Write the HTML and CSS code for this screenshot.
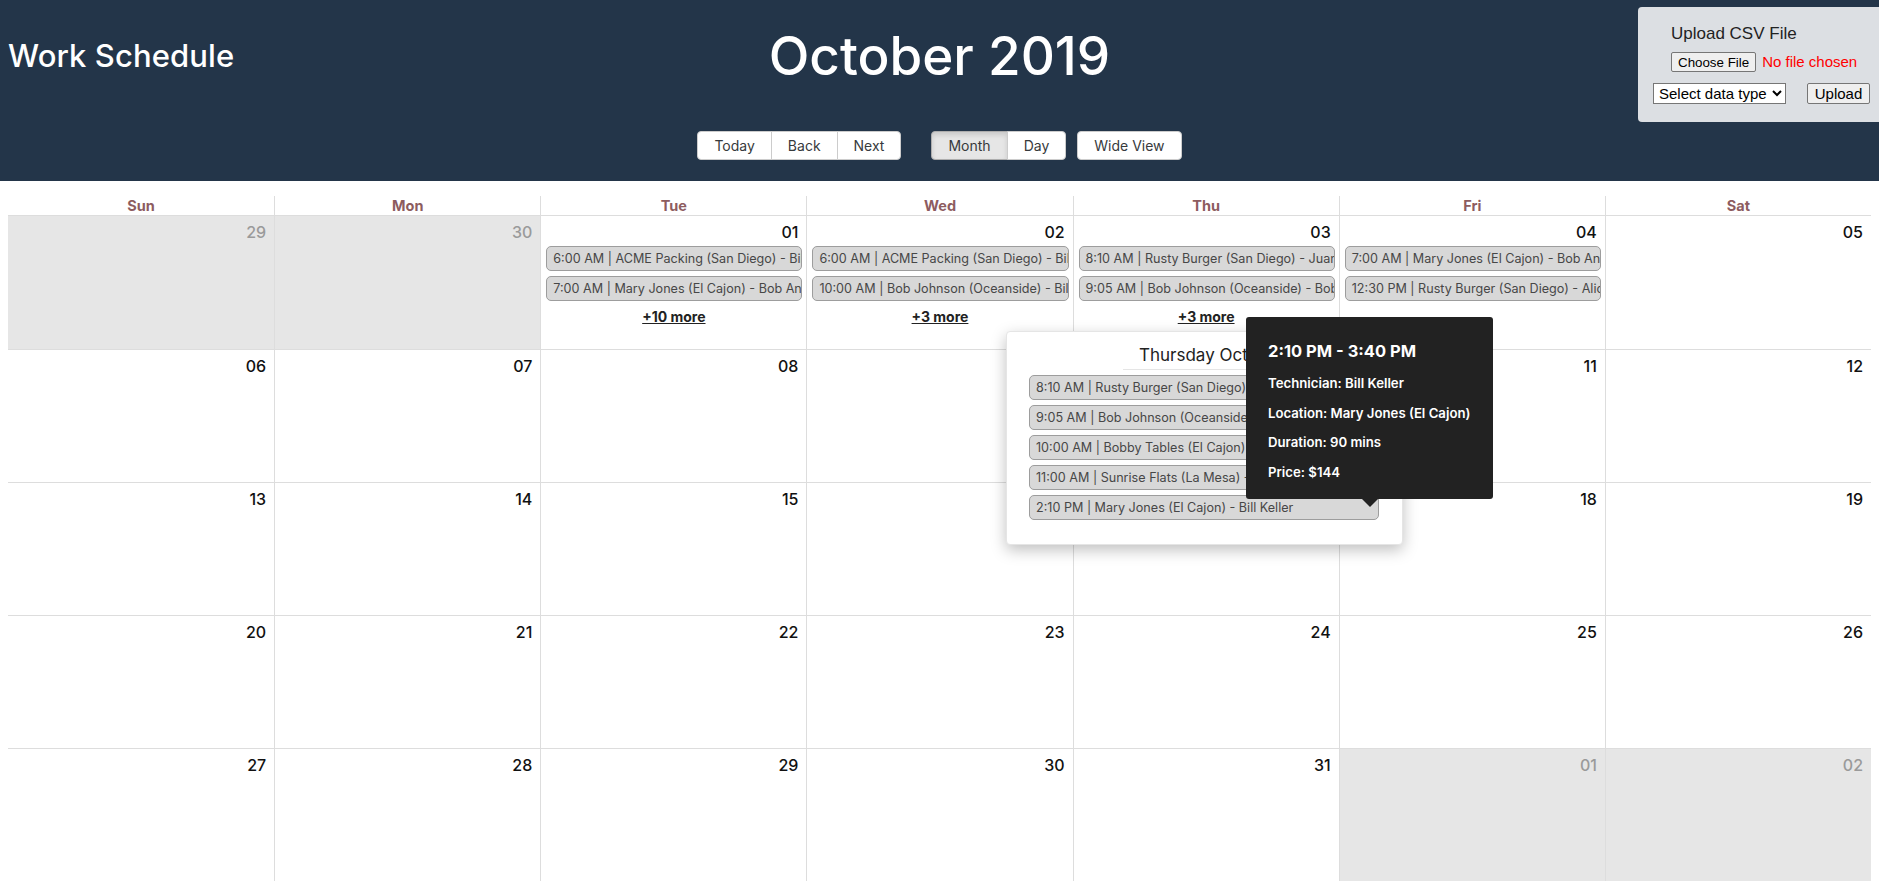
FILE: index.html
```html
<!DOCTYPE html>
<html lang="en">
<head>
<meta charset="utf-8">
<title>Work Schedule</title>
<link rel="stylesheet" href="styles.css">
</head>
<body>
<header class="topbar">
  <h1 class="app-title">Work Schedule</h1>
  <h2 class="month-title">October 2019</h2>
  <div class="upload-box">
    <div class="upload-title">Upload CSV File</div>
    <div class="upload-file"><input type="file" class="file-input"></div>
    <div class="upload-row">
      <select class="type-select">
        <option>Select data type</option>
        <option>Jobs</option>
        <option>Technicians</option>
      </select>
      <button class="upload-btn">Upload</button>
    </div>
  </div>
  <div class="toolbar">
    <div class="btn-group">
      <button class="tb-btn">Today</button>
      <button class="tb-btn">Back</button>
      <button class="tb-btn">Next</button>
    </div>
    <div class="btn-group group-view">
      <button class="tb-btn active">Month</button>
      <button class="tb-btn">Day</button>
    </div>
    <div class="btn-group group-wide">
      <button class="tb-btn">Wide View</button>
    </div>
  </div>
</header>

<main class="calendar">
  <div class="month-header">
    <div class="day-name">Sun</div>
    <div class="day-name">Mon</div>
    <div class="day-name">Tue</div>
    <div class="day-name">Wed</div>
    <div class="day-name">Thu</div>
    <div class="day-name">Fri</div>
    <div class="day-name">Sat</div>
  </div>
  <div class="weeks">
    <div class="week">
      <div class="day off"><div class="date">29</div></div>
      <div class="day off"><div class="date">30</div></div>
      <div class="day">
        <div class="date">01</div>
        <div class="event">6:00 AM | ACME Packing (San Diego) - Bill Keller</div>
        <div class="event">7:00 AM | Mary Jones (El Cajon) - Bob Anderson</div>
        <div class="show-more">+10 more</div>
      </div>
      <div class="day">
        <div class="date">02</div>
        <div class="event">6:00 AM | ACME Packing (San Diego) - Bill Keller</div>
        <div class="event">10:00 AM | Bob Johnson (Oceanside) - Bill Keller</div>
        <div class="show-more">+3 more</div>
      </div>
      <div class="day">
        <div class="date">03</div>
        <div class="event">8:10 AM | Rusty Burger (San Diego) - Juan Perez</div>
        <div class="event">9:05 AM | Bob Johnson (Oceanside) - Bob Anderson</div>
        <div class="show-more">+3 more</div>
      </div>
      <div class="day">
        <div class="date">04</div>
        <div class="event">7:00 AM | Mary Jones (El Cajon) - Bob Anderson</div>
        <div class="event">12:30 PM | Rusty Burger (San Diego) - Alice Smith</div>
      </div>
      <div class="day"><div class="date">05</div></div>
    </div>
    <div class="week">
      <div class="day"><div class="date">06</div></div>
      <div class="day"><div class="date">07</div></div>
      <div class="day"><div class="date">08</div></div>
      <div class="day"><div class="date">09</div></div>
      <div class="day"><div class="date">10</div></div>
      <div class="day"><div class="date">11</div></div>
      <div class="day"><div class="date">12</div></div>
    </div>
    <div class="week">
      <div class="day"><div class="date">13</div></div>
      <div class="day"><div class="date">14</div></div>
      <div class="day"><div class="date">15</div></div>
      <div class="day"><div class="date">16</div></div>
      <div class="day"><div class="date">17</div></div>
      <div class="day"><div class="date">18</div></div>
      <div class="day"><div class="date">19</div></div>
    </div>
    <div class="week">
      <div class="day"><div class="date">20</div></div>
      <div class="day"><div class="date">21</div></div>
      <div class="day"><div class="date">22</div></div>
      <div class="day"><div class="date">23</div></div>
      <div class="day"><div class="date">24</div></div>
      <div class="day"><div class="date">25</div></div>
      <div class="day"><div class="date">26</div></div>
    </div>
    <div class="week">
      <div class="day"><div class="date">27</div></div>
      <div class="day"><div class="date">28</div></div>
      <div class="day"><div class="date">29</div></div>
      <div class="day"><div class="date">30</div></div>
      <div class="day"><div class="date">31</div></div>
      <div class="day off"><div class="date">01</div></div>
      <div class="day off"><div class="date">02</div></div>
    </div>
  </div>
</main>

<div class="overlay">
  <div class="overlay-header">Thursday October 03</div>
  <div class="overlay-event">8:10 AM | Rusty Burger (San Diego) - Juan Perez</div>
  <div class="overlay-event">9:05 AM | Bob Johnson (Oceanside) - Bob Anderson</div>
  <div class="overlay-event">10:00 AM | Bobby Tables (El Cajon) - Alice Smith</div>
  <div class="overlay-event">11:00 AM | Sunrise Flats (La Mesa) - Juan Perez</div>
  <div class="overlay-event">2:10 PM | Mary Jones (El Cajon) - Bill Keller</div>
</div>

<div class="tooltip">
  <div class="tip-time">2:10 PM - 3:40 PM</div>
  <p class="tip-line">Technician: Bill Keller</p>
  <p class="tip-line">Location: Mary Jones (El Cajon)</p>
  <p class="tip-line">Duration: 90 mins</p>
  <p class="tip-line">Price: $144</p>
</div>
</body>
</html>
```

FILE: styles.css
```css
* { box-sizing: border-box; }

html, body {
  margin: 0;
  padding: 0;
}

body {
  font-family: Inter, "Open Sans", "Liberation Sans", sans-serif;
  color: #222;
  background: #fff;
  height: 889px;
  overflow: hidden;
}

/* ---------- top bar ---------- */
.topbar {
  background: #233549;
  display: grid;
  grid-template-columns: 1fr auto 1fr;
  grid-template-rows: auto auto;
  padding: 7px 0 21px 0;
  color: #fff;
}

.app-title {
  grid-column: 1;
  grid-row: 1;
  align-self: start;
  margin: 29px 0 0 8px;
  font-size: 31px;
  line-height: 40px;
  font-weight: 500;
  letter-spacing: 0.1px;
}

.month-title {
  grid-column: 2;
  grid-row: 1;
  justify-self: center;
  margin: 17px 0 0 0;
  font-size: 53px;
  line-height: 64px;
  font-weight: 500;
}

.toolbar {
  grid-column: 2;
  grid-row: 2;
  justify-self: center;
  margin-top: 43px;
  display: flex;
}

.btn-group {
  display: flex;
}

.group-view { margin-left: 30px; }
.group-wide { margin-left: 11px; }

.tb-btn {
  font-family: Inter, "Open Sans", sans-serif;
  font-size: 14px;
  line-height: 17px;
  color: #373a3c;
  background: #fff;
  border: 1px solid #ccc;
  padding: 5px 16px;
  margin: 0;
  border-radius: 0;
}

.tb-btn + .tb-btn { margin-left: -1px; }
.tb-btn:first-child { border-radius: 4px 0 0 4px; }
.tb-btn:last-child { border-radius: 0 4px 4px 0; }
.tb-btn:only-child { border-radius: 4px; }

.tb-btn.active {
  background: #e6e6e6;
  box-shadow: inset 0 3px 5px rgba(0, 0, 0, 0.125);
  border-color: #adadad;
}

/* ---------- upload box ---------- */
.upload-box {
  grid-column: 3;
  grid-row: 1 / span 2;
  justify-self: end;
  align-self: start;
  width: 241px;
  background: #dcdfe3;
  border-radius: 4px 0 0 4px;
  padding: 16px 9px 18px 15px;
  color: #222;
  font-family: "Liberation Sans", Arial, sans-serif;
}

.upload-title {
  margin-left: 18px;
  font-size: 17px;
  line-height: 22px;
}

.upload-file {
  margin: 7px 0 0 18px;
  height: 20px;
}

.file-input {
  font-family: "Liberation Sans", Arial, sans-serif;
  font-size: 15px;
  color: #ff0000;
  width: 200px;
  height: 20px;
  line-height: 18px;
}

.file-input::file-selector-button {
  font-family: "Liberation Sans", Arial, sans-serif;
  font-size: 13.33px;
  color: #000;
  background: #efefef;
  border: 1px solid #767676;
  border-radius: 2px;
  padding: 1px 6px;
  height: 20px;
  margin-right: 6px;
}

.upload-row {
  margin-top: 11px;
  display: flex;
  align-items: center;
  gap: 21px;
}

.type-select {
  font-family: "Liberation Sans", Arial, sans-serif;
  font-size: 15px;
  width: 133px;
  height: 21px;
  padding: 0 1px;
  border: 1px solid #767676;
  border-radius: 0;
  background: #fff;
  color: #000;
}

.upload-btn {
  font-family: "Liberation Sans", Arial, sans-serif;
  font-size: 15px;
  width: 63px;
  height: 21px;
  padding: 0 6px;
  line-height: 17px;
  background: #efefef;
  border: 1px solid #767676;
  border-radius: 2px;
  color: #000;
}

/* ---------- calendar ---------- */
.calendar {
  margin: 15px 8px 0 8px;
  height: 685px;
  display: flex;
  flex-direction: column;
}

.month-header {
  display: grid;
  grid-template-columns: repeat(7, 1fr);
  border-bottom: 1px solid #ddd;
}

.day-name {
  text-align: center;
  font-weight: 700;
  font-size: 14.5px;
  line-height: 19px;
  color: #8d5c5f;
  padding: 0 3px;
}

.day-name + .day-name { border-left: 1px solid #ddd; }

.weeks {
  flex: 1;
  display: grid;
  grid-template-rows: repeat(5, 1fr);
  min-height: 0;
}

.week {
  display: grid;
  grid-template-columns: repeat(7, 1fr);
  min-height: 0;
}

.week + .week { border-top: 1px solid #ddd; }

.day {
  min-width: 0;
  overflow: hidden;
}

.day + .day { border-left: 1px solid #ddd; }

.day.off { background: #e6e6e6; }

.date {
  text-align: right;
  padding: 6px 8px 0 0;
  font-size: 16px;
  line-height: 20px;
  font-weight: 500;
  color: #111;
}

.off .date { color: #9a9a9a; }

.event,
.overlay-event {
  height: 25px;
  border: 1px solid #9d9d9d;
  border-radius: 5px;
  background: #d8d8d8;
  padding: 0 6px;
  font-size: 12.6px;
  line-height: 23px;
  color: #474747;
  white-space: nowrap;
  overflow: hidden;
}

.event { margin: 4px 4px 0 5px; }
.event + .event { margin-top: 5px; }

.show-more {
  margin-top: 6px;
  text-align: center;
  font-weight: 700;
  font-size: 14px;
  line-height: 20px;
  text-decoration: underline;
  color: #222;
}

/* ---------- "show more" overlay ---------- */
.overlay {
  position: absolute;
  left: 1006px;
  top: 331px;
  width: 397px;
  background: #fff;
  border: 1px solid #e5e5e5;
  border-radius: 4px;
  box-shadow: 0 5px 15px rgba(0, 0, 0, 0.25);
  padding: 12px 23px 24px 22px;
  z-index: 5;
}

.overlay-header {
  display: inline-block;
  margin-left: 94px;
  padding: 0 16px 3px;
  border-bottom: 1px solid #e5e5e5;
  font-size: 17px;
  line-height: 22px;
  color: #222;
}

.overlay-event { margin-top: 5px; }

/* ---------- tooltip ---------- */
.tooltip {
  position: absolute;
  left: 1246px;
  top: 317px;
  width: 247px;
  background: #222;
  color: #fff;
  border-radius: 3px;
  padding: 22px 12px 17px 22px;
  z-index: 10;
}

.tooltip::after {
  content: "";
  position: absolute;
  top: 100%;
  left: 50%;
  margin-left: -8px;
  border: 8px solid transparent;
  border-top-color: #222;
  border-bottom-width: 0;
}

.tip-time {
  font-size: 16.5px;
  font-weight: 700;
  line-height: 24px;
}

.tip-line {
  margin: 9.5px 0 0;
  font-size: 13.2px;
  font-weight: 600;
  line-height: 20px;
}

.tip-time + .tip-line { margin-top: 10px; }
```
